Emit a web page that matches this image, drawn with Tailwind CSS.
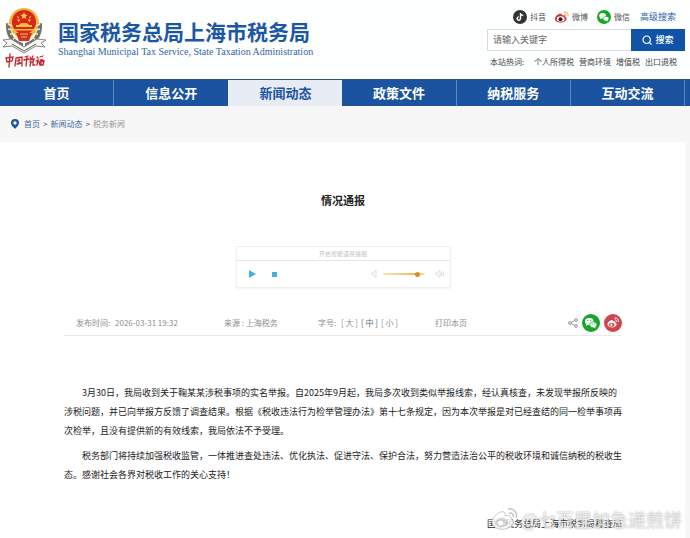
<!DOCTYPE html>
<html lang="zh-CN">
  <head>
    <meta charset="UTF-8" />
    <meta name="viewport" content="width=device-width, initial-scale=1" />
    <title>情况通报 - 国家税务总局上海市税务局</title>
    <script src="https://cdn.jsdelivr.net/npm/@tailwindcss/browser@4"></script>
  </head>
  <body class="relative flex min-h-screen flex-col overflow-x-hidden bg-white font-['Noto_Sans_CJK_SC',sans-serif] text-[9px] text-[#222]">

    <header class="flex h-[79px] items-start justify-between bg-[#fdfefe] pr-[5px] pl-[2px]">
      <a href="#" class="flex items-start">
        <!-- emblem -->
        <svg class="mt-[7px] h-[63px] w-[46px]" viewBox="0 0 46 63">
          <circle cx="22" cy="16" r="15" fill="#e9b93c" />
          <path d="M4 16C3 28 9 38 21 41L21 36C12 34 8 26 8 17ZM40 16C41 28 35 38 23 41L23 36C32 34 36 26 36 17Z" fill="#777268" />
          <path d="M6 17l4 2M6 22l5 1M8 27l5 0M11 32l5-2M38 17l-4 2M38 22l-5 1M36 27l-5 0M33 32l-5-2" stroke="#f3e6bd" stroke-width="1.5" />
          <circle cx="22" cy="15" r="12" fill="#d9261c" />
          <path d="M22 5l1 2.500 2.700.2-2.100 1.700.7 2.600-2.300-1.400-2.300 1.400.7-2.600-2.100-1.700 2.700-.2Z" fill="#f9d548" />
          <path d="M15 9l2 1-1 2zM29 9l-2 1 1 2zM15 13l3-1-1 3zM29 13l-3-1 1 3z" fill="#f9d548" />
          <path d="M14 20h16v-2h-3l-2-2h-6l-2 2h-3z" fill="#f1bd3a" />
          <path d="M12 22h20v1.500H12z" fill="#f1bd3a" />
          <path d="M14 26h16l-3 8h-10z" fill="#d0301f" />
          <path d="M18 27h8M19 30h6" stroke="#efc54b" />
          <path d="M1 33l8-1 13 8 13-8 9 1-5 3 4 4-9-1-12 7-12-7-9 1 4-4z" fill="#f7f7f4" stroke="#85888a" stroke-width="1" />
          <path d="M10 37l12 7 12-7" fill="none" stroke="#55595c" stroke-width="1" />
          <g fill="none" stroke="#c8242b" stroke-width="1.300" stroke-linecap="round">
            <path d="M4 51l7-1-1 4-5 1zM8 47l-1 13" />
            <path d="M14 51l-1 8M14 51l6-1 0 9M15 54l3-1M17 52v5M15 57l4-1" />
            <path d="M23 50l3-1M22 53l5-1M25 50l-1 9M28 50l1 2M31 49l-1 2M28 53l4-1-1 3-3 0M29 55l-1 4M31 55l0 3 2 0" />
            <path d="M35 50l1 1M34 54l2-1-1 5M38 50l3-1M38 53h3M37 55l5-1-1 4-3 0zM39 54v4" />
          </g>
        </svg>
        <span class="mt-[17px] ml-[10px] block">
          <span class="block text-[21px] leading-[28px] font-bold text-[#1c57a5]">国家税务总局上海市税务局</span>
          <span class="block font-['Liberation_Serif',serif] text-[10px] leading-[14px] text-[#3567a8]">Shanghai Municipal Tax Service, State Taxation Administration</span>
        </span>
      </a>

      <div class="flex w-[198px] flex-col">
        <div class="mt-[10px] flex h-[14px] items-center pl-[26px] text-[8px] text-[#555]">
          <a href="#" class="flex w-[42px] items-center gap-[3px]">
            <svg class="h-[14px] w-[14px]" viewBox="0 0 14 14">
              <circle cx="7" cy="7" r="7" fill="#333" />
              <path d="M7.500 3v5.600a1.700 1.700 0 1 1-1.700-1.700M7.500 3c.2 1.500 1.200 2.400 2.700 2.500" fill="none" stroke="#fff" stroke-width="1.400" />
            </svg>
            抖音
          </a>
          <a href="#" class="flex w-[42px] items-center gap-[3px]">
            <svg class="h-[14px] w-[14px]" viewBox="0 0 14 14">
              <path d="M0 9c0-3 4-6 6.500-5 1 0 .8 1.200.8 1.600 1.700-.6 3.400-.3 3 1.400 2 .8 1.500 3-.3 4.200C6 14 0 12.500 0 9z" fill="#d8333c" />
              <ellipse cx="5.700" cy="9" rx="3.900" ry="2.700" fill="#fff" />
              <circle cx="5.500" cy="9.200" r="2" fill="#222" />
              <path d="M9 2c2.700-.5 4.600 1.500 4 4M9.300 4c1.400-.2 2.200.7 1.900 1.900" fill="none" stroke="#efa23c" stroke-width="1" />
            </svg>
            微博
          </a>
          <a href="#" class="flex w-[43px] items-center gap-[3px]">
            <svg class="h-[14px] w-[14px]" viewBox="0 0 14 14">
              <circle cx="7" cy="7" r="7" fill="#15a826" />
              <ellipse cx="5.600" cy="5.700" rx="3.400" ry="2.800" fill="#fff" />
              <ellipse cx="9" cy="8.700" rx="2.900" ry="2.300" fill="#fff" stroke="#15a826" stroke-width=".6" />
              <path d="M3.500 7.500L3.300 9.300 5 8.300zM10.500 10.300l.6 1.200-2-.6z" fill="#fff" />
            </svg>
            微信
          </a>
          <a href="#" class="text-[9px] text-[#2c62a8]">高级搜索</a>
        </div>
        <form class="mt-[5px] flex h-[22px]">
          <input type="text" aria-label="请输入关键字" placeholder="请输入关键字" class="min-w-0 flex-1 border border-r-0 border-[#d9dcdf] bg-white px-[5px] text-[9px] placeholder:text-[#666]" />
          <button type="button" class="flex w-[54px] items-center justify-center gap-[3px] bg-[#0f54a6] text-[9px] font-medium text-white">
            <svg class="h-[10px] w-[10px]" viewBox="0 0 10 10" fill="none" stroke="#fff" stroke-width="1.200">
              <circle cx="4.700" cy="4.700" r="3.700" />
              <path d="M7.300 7.300L9.500 9.500" />
            </svg>
            搜索
          </button>
        </form>
        <div class="mt-[5px] flex gap-[5px] pl-[3px] text-[8px] leading-[12px] whitespace-nowrap text-[#444]">
          <span class="w-[39px]">本站热词:</span>
          <a href="#">个人所得税</a>
          <a href="#">营商环境</a>
          <a href="#">增值税</a>
          <a href="#">出口退税</a>
        </div>
      </div>
    </header>

    <nav class="border-t border-[#2d5375] bg-[#1b53a1] pr-[5px]">
      <div class="grid h-[26px] grid-cols-6 text-center text-[13px] leading-[26px] font-bold text-white">
        <a href="#" class="border-r border-[#5f88bf]">首页</a>
        <a href="#">信息公开</a>
        <a href="#" class="bg-[#e7ecf5] text-[#1b53a1]">新闻动态</a>
        <a href="#" class="border-r border-[#5f88bf]">政策文件</a>
        <a href="#" class="border-r border-[#5f88bf]">纳税服务</a>
        <a href="#" class="border-r border-[#5f88bf]">互动交流</a>
      </div>
    </nav>

    <div class="flex flex-1 flex-col bg-[#f7f7f8] pr-[5px]">
      <div class="flex h-[36px] items-center gap-[3px] pl-[11px] text-[8px] text-[#333]">
        <svg class="mr-[2px] h-[10px] w-[8px]" viewBox="0 0 8 10">
          <path d="M4 0a4 4 0 0 0-4 4c0 2.500 2.500 4 4 6 1.500-2 4-3.500 4-6a4 4 0 0 0-4-4z" fill="#17559b" />
          <circle cx="4" cy="4" r="1.700" fill="#fff" />
        </svg>
        <a href="#" class="text-[#3f6a9c]">首页</a>
        <span>&gt;</span>
        <a href="#" class="text-[#3f6a9c]">新闻动态</a>
        <span>&gt;</span>
        <span class="text-[#999]">税务新闻</span>
      </div>

      <main class="flex-1 bg-white pr-[63px] pl-[64px]">
        <h1 class="pt-[49px] text-center text-[11px] leading-[18px] font-bold text-[#222]">情况通报</h1>

        <!-- audio player -->
        <div class="mx-auto mt-[37px] w-[215px] border border-[#f0f0f1] shadow-xs">
          <div class="h-[14px] border-b border-[#e6e6e8] text-center text-[6px] leading-[13px] text-[#c4c4c4]">开启智能语音播报</div>
          <div class="flex h-[26px] items-center pr-[6px] pl-[12px]">
            <button type="button" aria-label="播放">
              <svg class="h-[8px] w-[7px]" viewBox="0 0 7 8"><path d="M0 0l7 4-7 4z" fill="#40b4d6" /></svg>
            </button>
            <button type="button" aria-label="停止" class="ml-[16px] h-[5px] w-[5px] bg-[#40b4d6]"></button>
            <svg class="ml-auto h-[8px] w-[7px]" viewBox="0 0 7 8" fill="none" stroke="#ddd"><path d="M1 3h1l3-2.500v7L2 5H1z" /></svg>
            <input type="range" min="0" max="100" value="88" aria-label="音量" class="mr-[10px] ml-[5px] h-[2px] w-[42px] appearance-none rounded bg-linear-to-r from-[#f8e3b8] via-[#efb45c] via-80% to-[#f8e6c8] [&::-webkit-slider-thumb]:h-[5px] [&::-webkit-slider-thumb]:w-[5px] [&::-webkit-slider-thumb]:appearance-none [&::-webkit-slider-thumb]:rounded-full [&::-webkit-slider-thumb]:bg-[#da8f2e]" />
            <svg class="h-[8px] w-[9px]" viewBox="0 0 9 8" fill="none" stroke="#ddd"><path d="M1 3h1l3-2.500v7L2 5H1zM6.500 2.500v3M8.300 1v6" /></svg>
          </div>
        </div>

        <div class="mt-[23px] flex h-[25px] items-center border-b border-[#f0e8e8] pl-[12px] text-[8px] whitespace-nowrap text-[#8d8d8d]">
          <span class="w-[39px]">发布时间:</span>
          <time class="w-[109px]">2026-03-31 19:32</time>
          <span class="w-[94px]">来源 : 上海税务</span>
          <span class="flex w-[117px]">
            <span class="w-[23px]">字号:</span>
            <button type="button" class="w-[20px] text-left">[ 大 ]</button>
            <button type="button" class="w-[20px] text-left text-[#5f6b78]">[ 中 ]</button>
            <button type="button">[ 小 ]</button>
          </span>
          <button type="button">打印本页</button>
          <div class="ml-auto flex items-center gap-[4px]">
            <svg class="h-[10px] w-[10px]" viewBox="0 0 10 10" fill="none" stroke="#888" stroke-width=".9">
              <circle cx="2" cy="5" r="1.400" /><circle cx="8" cy="2" r="1.400" /><circle cx="8" cy="8" r="1.400" />
              <path d="M3.300 4.400L6.700 2.600M3.300 5.600L6.700 7.400" />
            </svg>
            <a href="#" aria-label="微信">
              <svg class="h-[18px] w-[18px]" viewBox="0 0 18 18">
                <circle cx="9" cy="9" r="9" fill="#17a727" />
                <ellipse cx="7.300" cy="7.500" rx="4.300" ry="3.400" fill="#fff" />
                <ellipse cx="11.300" cy="10.800" rx="3.600" ry="2.900" fill="#fff" stroke="#17a727" stroke-width=".7" />
                <path d="M4.500 9.800L4 12l2.300-1.200zM13 12.800l.8 1.700-2.300-.9z" fill="#fff" />
                <path d="M5.300 6.500h1M8.300 6.500h1M9.800 10h.8M12.200 10h.8" stroke="#17a727" stroke-width="1" />
              </svg>
            </a>
            <a href="#" aria-label="微博">
              <svg class="h-[18px] w-[18px]" viewBox="0 0 18 18">
                <circle cx="9" cy="9" r="9" fill="#d1434b" />
                <path d="M3.500 10.500c0-2.500 3.500-5 5-4.300.7.300.5 1 .4 1.400 1.500-.5 2.800-.2 2.500 1.200 1.800.6 1.500 2.700-.2 3.700-3 1.800-7.700.7-7.700-2z" fill="#fff" />
                <ellipse cx="7.600" cy="10.700" rx="2.800" ry="2" fill="#d1434b" />
                <circle cx="7.300" cy="10.800" r="1.200" fill="#fff" />
                <path d="M10.500 4c2.700-.4 4.500 1.500 3.900 4M10.900 5.900c1.200-.1 1.900.7 1.700 1.800" fill="none" stroke="#fff" />
              </svg>
            </a>
          </div>
        </div>

        <article class="mt-[47px] text-[9px] leading-[19px] text-[#222]">
          <p class="indent-[18px]">3月30日，我局收到关于鞠某某涉税事项的实名举报。自2025年9月起，我局多次收到类似举报线索，经认真核查，未发现举报所反映的涉税问题，并已向举报方反馈了调查结果。根据《税收违法行为检举管理办法》第十七条规定，因为本次举报是对已经查结的同一检举事项再次检举，且没有提供新的有效线索，我局依法不予受理。</p>
          <p class="mt-[6px] indent-[18px]">税务部门将持续加强税收监管，一体推进查处违法、优化执法、促进守法、保护合法，努力营造法治公平的税收环境和诚信纳税的税收生态。感谢社会各界对税收工作的关心支持！</p>
          <p class="mt-[30px] text-right">国家税务总局上海市税务局稽查局</p>
        </article>
      </main>
    </div>

    <!-- watermark -->
    <div class="absolute right-[8px] bottom-[6px] flex items-center gap-[2px] text-[18px] leading-[26px] whitespace-nowrap text-white/70 [text-shadow:0_0_2px_#999]">
      <svg class="h-[24px] w-[28px]" viewBox="0 0 28 24">
        <path d="M1 15C1 10 9 3 13 5c2 1 1 3 1 4 4-1 7 0 6 3 4 2 3 6-1 8C11 25 1 21 1 15z" fill="#fff" fill-opacity=".8" stroke="#bbb" stroke-width=".8" />
        <ellipse cx="10.500" cy="15.500" rx="6.500" ry="4.700" fill="#bbb" fill-opacity=".6" />
        <circle cx="9.500" cy="16" r="2.500" fill="#fff" />
        <path d="M17 2c6-1 10 4 8 9M18 6c3-.5 5 2 4 4" fill="none" stroke="#c4c4c4" stroke-width="1.500" />
      </svg>
      <span>@七百里加急递煎饼</span>
    </div>

  </body>
</html>
